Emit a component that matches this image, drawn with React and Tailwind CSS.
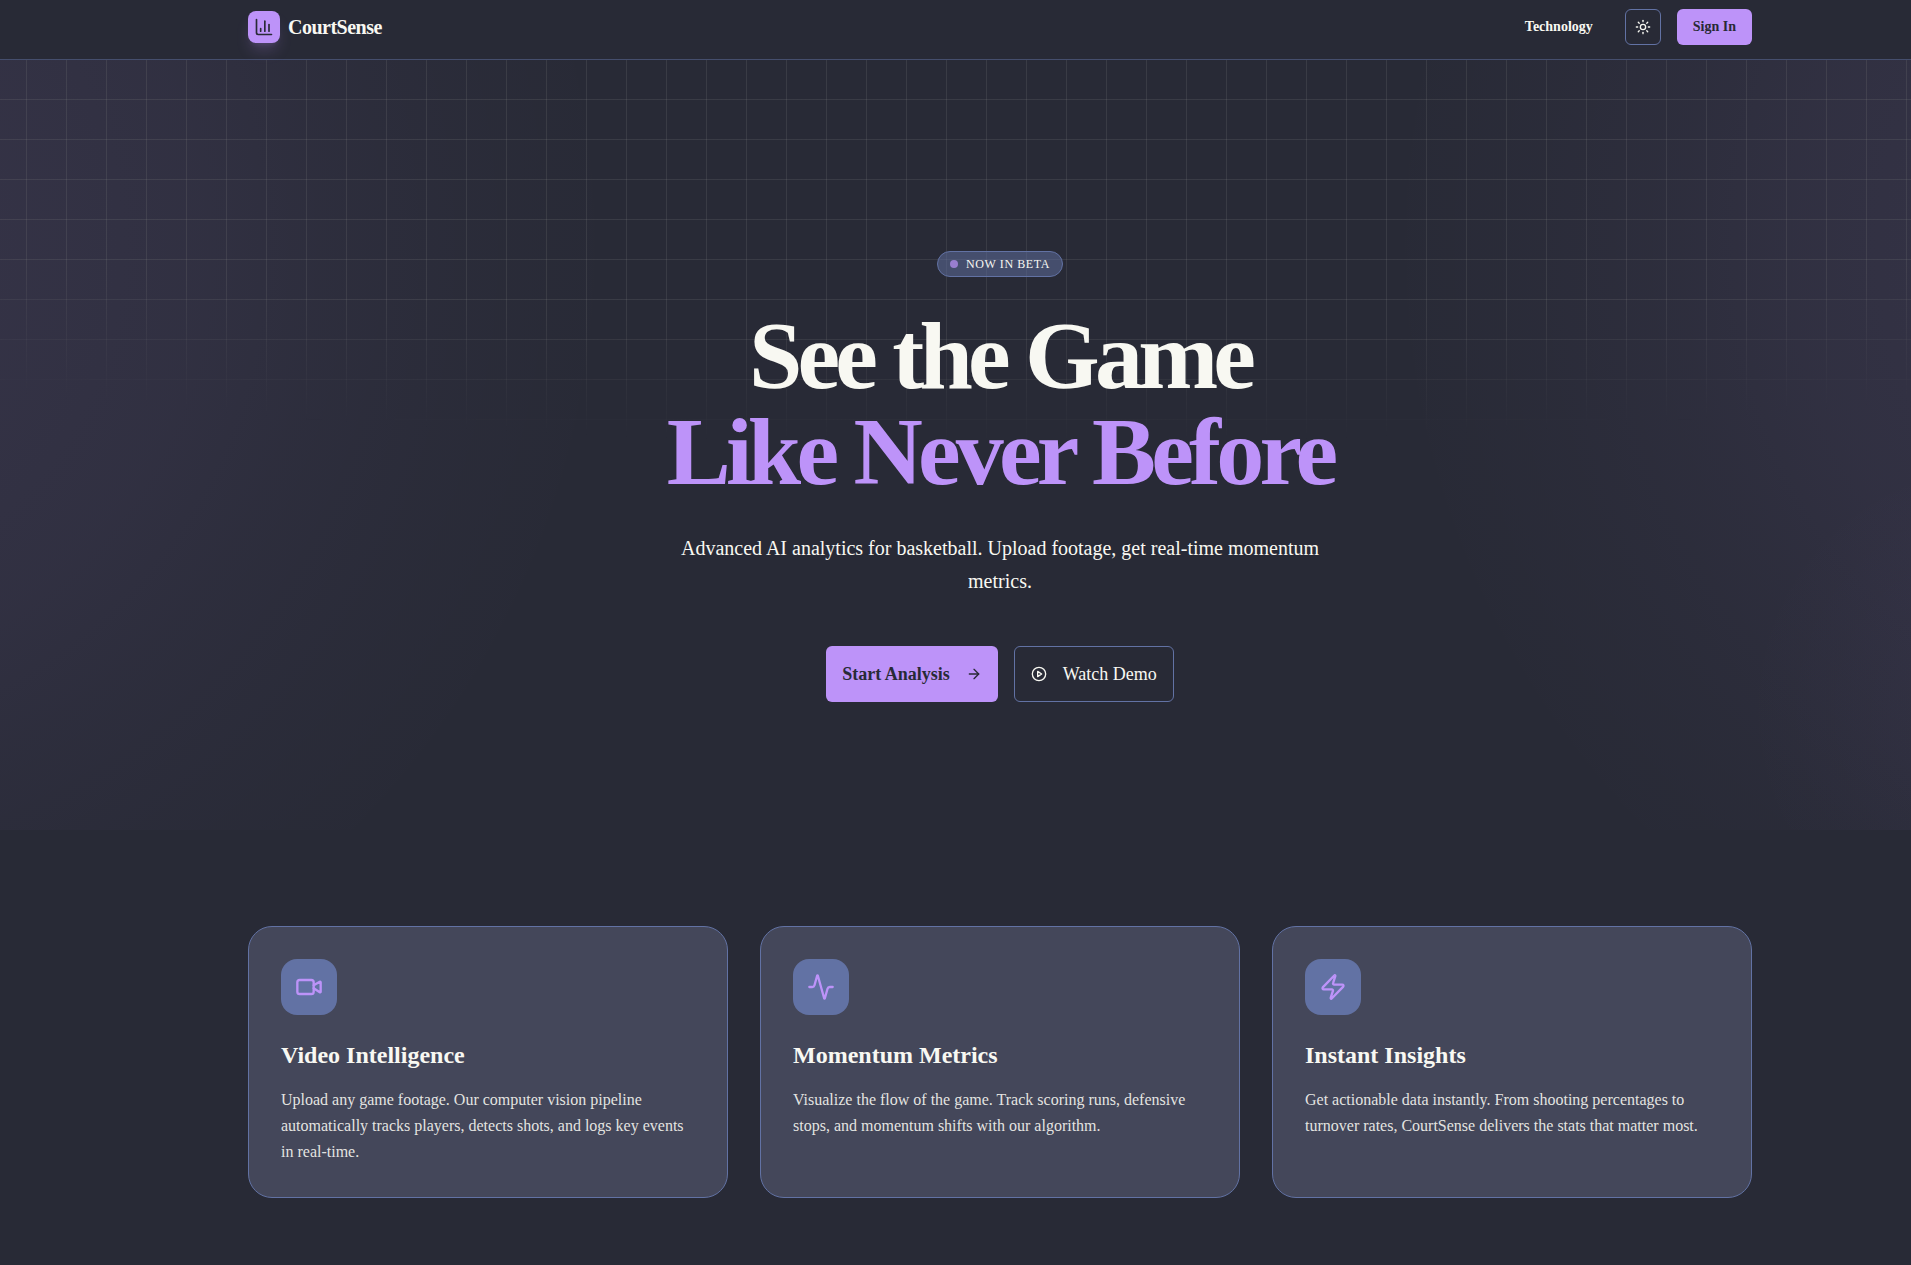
import { ChartColumn, Sun, ArrowRight, Video, Activity, Zap } from "lucide-react";

const features = [
  {
    icon: Video,
    title: "Video Intelligence",
    text: "Upload any game footage. Our computer vision pipeline automatically tracks players, detects shots, and logs key events in real-time.",
  },
  {
    icon: Activity,
    title: "Momentum Metrics",
    text: "Visualize the flow of the game. Track scoring runs, defensive stops, and momentum shifts with our algorithm.",
  },
  {
    icon: Zap,
    title: "Instant Insights",
    text: "Get actionable data instantly. From shooting percentages to turnover rates, CourtSense delivers the stats that matter most.",
  },
];

function PlayIcon() {
  return (
    <svg
      aria-hidden="true"
      viewBox="0 0 24 24"
      className="size-4"
      fill="none"
      stroke="currentColor"
      strokeWidth="2"
      strokeLinecap="round"
      strokeLinejoin="round"
    >
      <circle cx="12" cy="12" r="10" />
      <polygon points="10 8 16 12 10 16 10 8" />
    </svg>
  );
}

function Header() {
  return (
    <header className="relative z-10 border-b border-[#6272a4]/50 bg-[#282a36] pl-[89px]">
      <div className="mx-auto flex h-[59px] max-w-[1536px] items-center justify-between px-4 pb-[5px]">
        <a href="#" className="flex items-center gap-2">
          <span className="flex size-8 items-center justify-center rounded-lg bg-[#bd93f9] text-[#282a36] shadow-lg shadow-[#bd93f9]/20">
            <ChartColumn size={20} />
          </span>
          <span className="text-xl font-bold tracking-tight">CourtSense</span>
        </a>
        <nav className="flex items-center gap-4">
          <a href="#technology" className="px-4 text-sm font-bold">Technology</a>
          <button type="button" aria-label="Toggle theme" className="flex size-9 items-center justify-center rounded-md border border-[#6272a4]">
            <Sun size={16} />
          </button>
          <button type="button" className="h-9 rounded-md bg-[#bd93f9] px-4 text-sm font-bold text-[#282a36]">Sign In</button>
        </nav>
      </div>
    </header>
  );
}

function Backdrop() {
  return (
    <div aria-hidden="true" className="pointer-events-none absolute inset-0 overflow-hidden">
      <div className="absolute inset-0 bg-[radial-gradient(circle_at_-233px_186px,#bd93f915_200px,#bd93f90f_433px,#bd93f909_560px,#bd93f904_700px,#bd93f900_850px)]" />
      <div className="absolute inset-0 bg-[radial-gradient(circle_at_calc(100%+322px)_186px,#bd93f915_200px,#bd93f90f_433px,#bd93f909_560px,#bd93f904_700px,#bd93f900_850px)]" />
      <div className="absolute inset-0 bg-[radial-gradient(circle_at_calc(100%+90px)_650px,#bd93f907_60px,#bd93f900_260px)]" />
      <div className="absolute inset-0 bg-[linear-gradient(to_right,#80808034_1px,transparent_1px),linear-gradient(to_bottom,#80808034_1px,transparent_1px)] bg-[size:40px_40px] bg-[position:26px_0px] [mask-image:radial-gradient(ellipse_2000px_50%_at_1000px_0,#000_70%,transparent_100%)]" />
    </div>
  );
}

function Hero() {
  return (
    <section className="relative -mt-px pl-[89px]">
      <Backdrop />
      <div className="relative mx-auto flex max-w-[1536px] flex-col items-center px-4 pt-48 pb-32 text-center">
        <p className="flex items-center gap-2 rounded-full border border-[#6272a4] bg-[#6272a4]/50 px-3 py-1 text-xs leading-4 tracking-wider uppercase">
          <span className="size-2 rounded-full bg-[#bd93f9]/70" />
          Now in Beta
        </p>
        <h1 className="mt-[31px] text-8xl leading-none font-bold tracking-tighter">
          <span className="block">See the Game</span>
          <span className="block text-[#bd93f9]">Like Never Before</span>
        </h1>
        <p className="mt-8 max-w-2xl text-xl leading-[33px]">
          Advanced AI analytics for basketball. Upload footage, get real-time momentum metrics.
        </p>
        <div className="mt-12 flex gap-4">
          <button type="button" className="flex h-14 items-center gap-4 rounded-md bg-[#bd93f9] px-4 text-lg font-bold text-[#282a36]">
            Start Analysis
            <ArrowRight size={16} />
          </button>
          <button type="button" className="flex h-14 items-center gap-4 rounded-md border border-[#6272a4] px-4 text-lg">
            <PlayIcon />
            Watch Demo
          </button>
        </div>
      </div>
    </section>
  );
}

function Features() {
  return (
    <section id="technology" className="pt-24 pb-16 pl-[89px]">
      <div className="mx-auto grid max-w-[1536px] grid-cols-3 gap-8 px-4">
        {features.map(({ icon: Icon, title, text }) => (
          <article key={title} className="rounded-3xl border border-[#6272a4] bg-[#44475a] p-8">
            <div className="flex size-14 items-center justify-center rounded-2xl bg-[#6272a4] text-[#bd93f9]">
              <Icon size={28} />
            </div>
            <h2 className="mt-6 text-2xl leading-8 font-bold">{title}</h2>
            <p className="mt-4 text-base leading-[26px] text-[#f8f8f2]/90">{text}</p>
          </article>
        ))}
      </div>
    </section>
  );
}

export default function App() {
  return (
    <div className="min-h-screen bg-[#282a36] font-['Liberation_Serif',serif] text-[#f8f8f2]">
      <Header />
      <main>
        <Hero />
        <Features />
      </main>
    </div>
  );
}
